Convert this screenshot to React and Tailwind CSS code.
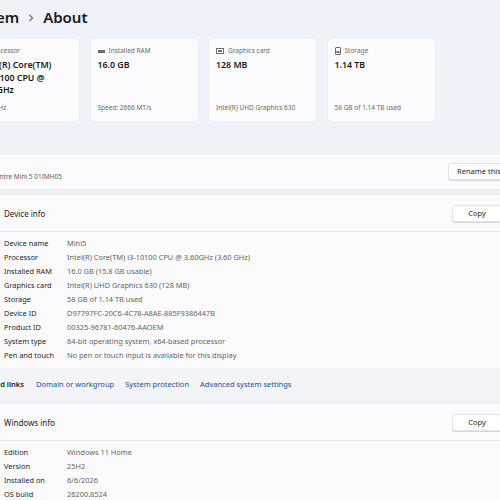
import { Fragment } from 'react'

const font = { fontFamily: '"Noto Sans", "Open Sans", sans-serif' }

const specs = [
  { icon: 'cpu', label: 'Processor', lines: ['Intel(R) Core(TM)', 'i3-10100 CPU @', '3.60GHz'], foot: '3.60 GHz' },
  { icon: 'ram', label: 'Installed RAM', lines: ['16.0 GB'], foot: 'Speed: 2666 MT/s' },
  { icon: 'gpu', label: 'Graphics card', lines: ['128 MB'], foot: 'Intel(R) UHD Graphics 630' },
  { icon: 'disk', label: 'Storage', lines: ['1.14 TB'], foot: '58 GB of 1.14 TB used' },
]

const deviceRows = [
  ['Device name', 'Mini5'],
  ['Processor', 'Intel(R) Core(TM) i3-10100 CPU @ 3.60GHz (3.60 GHz)'],
  ['Installed RAM', '16.0 GB (15.8 GB usable)'],
  ['Graphics card', 'Intel(R) UHD Graphics 630 (128 MB)'],
  ['Storage', '58 GB of 1.14 TB used'],
  ['Device ID', 'D97797FC-20C6-4C78-A8AE-885F9386447B'],
  ['Product ID', '00325-96781-60476-AAOEM'],
  ['System type', '64-bit operating system, x64-based processor'],
  ['Pen and touch', 'No pen or touch input is available for this display'],
]

const windowsRows = [
  ['Edition', 'Windows 11 Home'],
  ['Version', '25H2'],
  ['Installed on', '6/6/2026'],
  ['OS build', '26200.8524'],
]

const SpecIcon = ({ kind }) => {
  if (kind === 'ram')
    return (
      <svg width="7" height="5" viewBox="0 0 7 5">
        <rect x="0" y="1" width="7" height="3" fill="#6b6b6b" />
      </svg>
    )
  if (kind === 'gpu')
    return (
      <svg width="8" height="6" viewBox="0 0 8 6">
        <rect x="0.5" y="0.5" width="7" height="5" fill="none" stroke="#6b6b6b" />
        <rect x="2" y="2" width="4" height="2" fill="#6b6b6b" />
      </svg>
    )
  if (kind === 'disk')
    return (
      <svg width="6" height="8" viewBox="0 0 6 8">
        <rect x="0.5" y="0.5" width="5" height="7" rx="0.5" fill="none" stroke="#6b6b6b" />
        <rect x="1.5" y="4" width="3" height="2" fill="#6b6b6b" />
      </svg>
    )
  return (
    <svg width="7" height="7" viewBox="0 0 7 7">
      <rect x="0.5" y="0.5" width="6" height="6" fill="none" stroke="#6b6b6b" />
    </svg>
  )
}

const SpecCard = ({ spec }) => (
  <div className="w-[109px] h-[84px] shrink-0 rounded-[4px] bg-[#fcfcfe] border border-[#eceef2] px-[7px] pt-[7px] pb-[8px] flex flex-col">
    <div className="flex items-center gap-[4px] h-[10px] text-[6.5px] text-[#6a6a6a]">
      <SpecIcon kind={spec.icon} />
      <span>{spec.label}</span>
    </div>
    <div className="mt-[3px] text-[8.8px] leading-[12.5px] font-semibold text-[#1b1b1b]">
      {spec.lines.map((l) => (
        <div key={l}>{l}</div>
      ))}
    </div>
    <div className="mt-auto text-[6.5px] text-[#6a6a6a]">{spec.foot}</div>
  </div>
)

const Button = ({ children, className }) => (
  <div
    className={`h-[17px] flex items-center shrink-0 rounded-[3px] bg-white border border-[#e3e3e6] shadow-[0_1px_0_#d8d8dc] text-[7.5px] text-[#1f1f1f] whitespace-nowrap ${className}`}
  >
    {children}
  </div>
)

const InfoRows = ({ rows }) => (
  <div className="grid grid-cols-[63px_1fr] pl-[32px] pt-[5px] pb-[5px]">
    {rows.map(([k, v]) => (
      <Fragment key={k}>
        <div className="h-[14px] flex items-center text-[7.4px] text-[#1f1f1f] whitespace-nowrap">{k}</div>
        <div className="h-[14px] flex items-center text-[7.4px] text-[#646464] whitespace-nowrap">{v}</div>
      </Fragment>
    ))}
  </div>
)

const SectionHeader = ({ title }) => (
  <div className="h-[37px] flex items-center justify-between pl-[32px] pr-[28px] pt-[1px] border-b border-[#e9e9ec]">
    <span className="text-[8px] text-[#1b1b1b]">{title}</span>
    <Button className="w-[50px] justify-center">Copy</Button>
  </div>
)

export default function App() {
  return (
    <div className="w-[500px] h-[500px] overflow-hidden bg-[#eff2f8]" style={font}>
      <div className="w-[560px] ml-[-29px]">
        {/* breadcrumb title */}
        <div className="h-[34px] flex items-center gap-[9px] text-[15px] font-semibold text-[#1a1a1a]">
          <span className="ml-[-5px]">System</span>
          <svg width="6" height="8" viewBox="0 0 6 8" className="mt-[1px]">
            <path d="M1.5 1 L4.5 4 L1.5 7" fill="none" stroke="#6b6b6b" strokeWidth="1.1" />
          </svg>
          <span>About</span>
        </div>

        {/* hardware summary cards */}
        <div className="flex gap-[9.5px] mt-[4px]">
          {specs.map((s) => (
            <SpecCard key={s.label} spec={s} />
          ))}
        </div>

        {/* device name + rename */}
        <div className="mt-[31px] h-[37px] rounded-[4px] bg-[#fbfbfd] border border-[#eceef2] flex items-center justify-between">
          <div className="text-[6.5px] text-[#5f5f5f] pl-[3px] pt-[11px]">ThinkCentre Mini 5 01IMH05</div>
          <Button className="mr-[-8px] w-[90px] pl-[8px]">Rename this PC</Button>
        </div>

        {/* device specifications */}
        <div className="mt-[4px] rounded-t-[4px] bg-[#fbfbfd] border border-b-0 border-[#eceef2]">
          <SectionHeader title="Device info" />
          <InfoRows rows={deviceRows} />
        </div>

        {/* related links */}
        <div className="h-[34px] bg-[#f3f4f7] border-x border-[#eceef2] flex items-center pl-[5px] text-[7.5px]">
          <span className="font-semibold text-[#1b1b1b]">Related links</span>
          <span className="ml-[12px] text-[#1f4f8f]">Domain or workgroup</span>
          <span className="ml-[11px] text-[#1f4f8f]">System protection</span>
          <span className="ml-[11px] text-[#1f4f8f]">Advanced system settings</span>
        </div>

        {/* windows specifications */}
        <div className="mt-[1px] rounded-t-[4px] bg-[#fbfbfd] border border-b-0 border-[#eceef2]">
          <SectionHeader title="Windows info" />
          <InfoRows rows={windowsRows} />
        </div>
      </div>
    </div>
  )
}
